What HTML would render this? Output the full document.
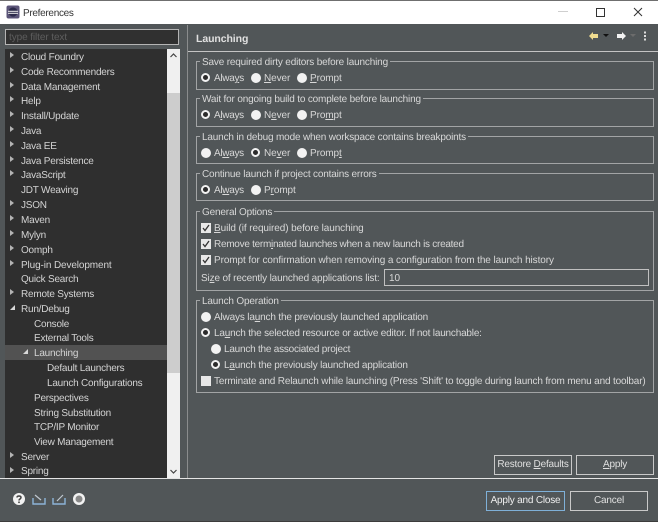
<!DOCTYPE html>
<html><head><meta charset="utf-8"><style>
html,body{margin:0;padding:0;width:658px;height:522px;overflow:hidden;background:#515658}
body{position:relative;font-family:"Liberation Sans",sans-serif;font-size:10px;color:#d8d8d8;text-rendering:geometricPrecision;filter:blur(.3px)}
.a{position:absolute}
.t{position:absolute;line-height:16px;margin-top:1px;white-space:nowrap;letter-spacing:-.09px}
.tr{color:#d4d4d4;letter-spacing:-.22px}
.g{position:absolute;left:196px;width:456px;border:1px solid #a2a4a5;box-sizing:content-box}
.l{position:absolute;background:#515658;padding:0 2px;line-height:14px;white-space:nowrap;left:3px;top:-6px;letter-spacing:-.17px}
.r{position:absolute;width:10px;height:10px;border-radius:50%;background:#f2f2f2}
.r.on{background:#2b2b2b;width:5px;height:5px;border:2.5px solid #f2f2f2}
.c{position:absolute;width:10px;height:10px;background:#e8e8e8}
.c svg{position:absolute;left:0;top:0}
.b{position:absolute;box-sizing:border-box;height:20px;border:1.5px solid #c9c9c9;text-align:center;line-height:18px;color:#e0e0e0;white-space:nowrap;letter-spacing:-.2px}
.ar{position:absolute;width:0;height:0;border-left:4px solid #b4b4b4;border-top:3.5px solid transparent;border-bottom:3.5px solid transparent;left:10px}
.ex{position:absolute;width:0;height:0;border-right:5px solid #d8d8d8;border-top:5px solid transparent}
u{text-decoration:underline}
</style></head><body>
<!-- title bar -->
<div class="a" style="left:0;top:0;width:658px;height:24px;background:#fff"></div>
<div class="a" style="left:0;top:0;width:658px;height:1px;background:#6f6f6f"></div>
<svg class="a" style="left:6px;top:5px" width="14" height="14" viewBox="0 0 14 14"><rect x="0.5" y="0.5" width="13" height="13" rx="2" fill="#5b5578"/><circle cx="7" cy="7" r="4.6" fill="#2c2a4a"/><rect x="2" y="5.8" width="10" height="1" fill="#eee"/><rect x="2" y="7.8" width="10" height="1" fill="#eee"/></svg>
<div class="t" style="left:23px;top:5px;color:#333;letter-spacing:-.3px">Preferences</div>
<div class="a" style="left:558px;top:11px;width:10px;height:1px;background:#cfcfcf"></div>
<div class="a" style="left:596px;top:8px;width:7px;height:7px;border:1px solid #333"></div>
<svg class="a" style="left:633px;top:7px" width="10" height="10"><path d="M1 1L9 9M9 1L1 9" stroke="#333" stroke-width="1"/></svg>

<!-- left -->
<div class="a" style="left:5px;top:29px;width:172px;height:14px;border:1.5px solid #b4b4b4;background:#303030"></div>
<div class="t" style="left:9px;top:29px;color:#5e5e5e">type filter text</div>
<div class="a" style="left:5px;top:49px;width:162px;height:429px;background:#2f2f2f;overflow:hidden"></div>
<div class="a" style="left:167px;top:49px;width:13px;height:429px;background:#f0f0f0"></div>
<div class="a" style="left:167px;top:93px;width:13px;height:280px;background:#cdcdcd"></div>
<svg class="a" style="left:170px;top:53px" width="7" height="5"><path d="M.5 4L3.5 1L6.5 4" fill="none" stroke="#444" stroke-width="1.2"/></svg>
<svg class="a" style="left:170px;top:469px" width="7" height="5"><path d="M.5 1L3.5 4L6.5 1" fill="none" stroke="#444" stroke-width="1.2"/></svg>
<div class="a" style="left:5px;top:345px;width:162px;height:15px;background:#525252"></div>

<div class="ar" style="top:52px"></div><div class="t tr" style="left:21px;top:49px">Cloud Foundry</div>
<div class="ar" style="top:67px"></div><div class="t tr" style="left:21px;top:64px">Code Recommenders</div>
<div class="ar" style="top:82px"></div><div class="t tr" style="left:21px;top:79px">Data Management</div>
<div class="ar" style="top:96px"></div><div class="t tr" style="left:21px;top:93px">Help</div>
<div class="ar" style="top:111px"></div><div class="t tr" style="left:21px;top:108px">Install/Update</div>
<div class="ar" style="top:126px"></div><div class="t tr" style="left:21px;top:123px">Java</div>
<div class="ar" style="top:141px"></div><div class="t tr" style="left:21px;top:138px">Java EE</div>
<div class="ar" style="top:156px"></div><div class="t tr" style="left:21px;top:153px">Java Persistence</div>
<div class="ar" style="top:170px"></div><div class="t tr" style="left:21px;top:167px">JavaScript</div>
<div class="t tr" style="left:21px;top:182px">JDT Weaving</div>
<div class="ar" style="top:200px"></div><div class="t tr" style="left:21px;top:197px">JSON</div>
<div class="ar" style="top:215px"></div><div class="t tr" style="left:21px;top:212px">Maven</div>
<div class="ar" style="top:230px"></div><div class="t tr" style="left:21px;top:227px">Mylyn</div>
<div class="ar" style="top:245px"></div><div class="t tr" style="left:21px;top:242px">Oomph</div>
<div class="ar" style="top:260px"></div><div class="t tr" style="left:21px;top:257px;letter-spacing:-.12px">Plug-in Development</div>
<div class="t tr" style="left:21px;top:271px">Quick Search</div>
<div class="ar" style="top:289px"></div><div class="t tr" style="left:21px;top:286px">Remote Systems</div>
<div class="ex" style="left:10px;top:305px"></div><div class="t tr" style="left:21px;top:301px">Run/Debug</div>
<div class="t tr" style="left:34px;top:316px">Console</div>
<div class="t tr" style="left:34px;top:330px">External Tools</div>
<div class="ex" style="left:23px;top:349px"></div><div class="t tr" style="left:34px;top:345px">Launching</div>
<div class="t tr" style="left:47px;top:360px">Default Launchers</div>
<div class="t tr" style="left:47px;top:375px">Launch Configurations</div>
<div class="t tr" style="left:34px;top:390px">Perspectives</div>
<div class="t tr" style="left:34px;top:405px">String Substitution</div>
<div class="t tr" style="left:34px;top:419px">TCP/IP Monitor</div>
<div class="t tr" style="left:34px;top:434px">View Management</div>
<div class="ar" style="top:452px"></div><div class="t tr" style="left:21px;top:449px">Server</div>
<div class="ar" style="top:467px"></div><div class="t tr" style="left:21px;top:463px">Spring</div>

<!-- sash + separators -->
<div class="a" style="left:187px;top:25px;width:1px;height:453px;background:#8a8c8d"></div>
<div class="a" style="left:188px;top:51px;width:470px;height:1px;background:#c4c4c4"></div>
<div class="a" style="left:0;top:478px;width:658px;height:1px;background:#e4e4e4"></div>
<div class="a" style="left:0;top:521px;width:658px;height:1px;background:#3c3c3c"></div>

<!-- header -->
<div class="t" style="left:196px;top:30px;font-weight:bold;color:#e0e0e0;font-size:10.5px">Launching</div>
<svg class="a" style="left:587px;top:30px" width="60" height="12"><path d="M2 6L6 2V4H11V8H6V10Z" fill="#f0dc90"/><path d="M16 4H22L19 7Z" fill="#111"/><path d="M39 6L35 2V4H30V8H35V10Z" fill="#f2f2f2"/><path d="M43 4H49L46 7Z" fill="#6c6c6c"/><rect x="57" y="1.500" width="2" height="2" fill="#ddd"/><rect x="57" y="5" width="2" height="2" fill="#ddd"/><rect x="57" y="8.500" width="2" height="2" fill="#ddd"/></svg>

<!-- group 1 -->
<div class="g" style="top:61px;height:27px"><div class="l">Save required dirty editors before launching</div></div>
<div class="r on" style="left:201px;top:73px"></div><div class="t" style="left:214px;top:70px;letter-spacing:-.3px">Alwa<u>y</u>s</div>
<div class="r" style="left:251px;top:73px"></div><div class="t" style="left:264px;top:70px"><u>N</u>ever</div>
<div class="r" style="left:297px;top:73px"></div><div class="t" style="left:310px;top:70px"><u>P</u>rompt</div>
<!-- group 2 -->
<div class="g" style="top:98px;height:27px"><div class="l">Wait for ongoing build to complete before launching</div></div>
<div class="r on" style="left:201px;top:110px"></div><div class="t" style="left:214px;top:107px;letter-spacing:-.3px">A<u>l</u>ways</div>
<div class="r" style="left:251px;top:110px"></div><div class="t" style="left:264px;top:107px">N<u>e</u>ver</div>
<div class="r" style="left:297px;top:110px"></div><div class="t" style="left:310px;top:107px">Pro<u>m</u>pt</div>
<!-- group 3 -->
<div class="g" style="top:136px;height:26px"><div class="l">Launch in debug mode when workspace contains breakpoints</div></div>
<div class="r" style="left:201px;top:148px"></div><div class="t" style="left:214px;top:145px;letter-spacing:-.3px">Al<u>w</u>ays</div>
<div class="r on" style="left:251px;top:148px"></div><div class="t" style="left:264px;top:145px">Ne<u>v</u>er</div>
<div class="r" style="left:297px;top:148px"></div><div class="t" style="left:310px;top:145px">Promp<u>t</u></div>
<!-- group 4 -->
<div class="g" style="top:173px;height:26px"><div class="l">Continue launch if project contains errors</div></div>
<div class="r on" style="left:201px;top:185px"></div><div class="t" style="left:214px;top:182px;letter-spacing:-.3px">Al<u>w</u>ays</div>
<div class="r" style="left:251px;top:185px"></div><div class="t" style="left:264px;top:182px">P<u>r</u>ompt</div>
<!-- group 5 -->
<div class="g" style="top:211px;height:78px"><div class="l">General Options</div></div>
<div class="c" style="left:201px;top:223px"><svg width="10" height="10"><path d="M2 5L4 7.500L8 2" fill="none" stroke="#333" stroke-width="1.300"/></svg></div><div class="t" style="left:214px;top:220px"><u>B</u>uild (if required) before launching</div>
<div class="c" style="left:201px;top:239px"><svg width="10" height="10"><path d="M2 5L4 7.500L8 2" fill="none" stroke="#333" stroke-width="1.300"/></svg></div><div class="t" style="left:214px;top:236px;letter-spacing:-.27px">Remove term<u>i</u>nated launches when a new launch is created</div>
<div class="c" style="left:201px;top:255px"><svg width="10" height="10"><path d="M2 5L4 7.500L8 2" fill="none" stroke="#333" stroke-width="1.300"/></svg></div><div class="t" style="left:214px;top:252px">Prompt for confirmation when removing a configuration from the launch history</div>
<div class="t" style="left:201px;top:270px;letter-spacing:-.15px">Si<u>z</u>e of recently launched applications list:</div>
<div class="a" style="left:384px;top:269px;width:263px;height:15px;border:1.500px solid #c0c0c0"></div>
<div class="t" style="left:389px;top:270px">10</div>
<!-- group 6 -->
<div class="g" style="top:300px;height:91px"><div class="l">Launch Operation</div></div>
<div class="r" style="left:201px;top:312px"></div><div class="t" style="left:214px;top:309px;letter-spacing:-.17px">Always la<u>u</u>nch the previously launched application</div>
<div class="r on" style="left:201px;top:328px"></div><div class="t" style="left:214px;top:325px;letter-spacing:-.2px">La<u>u</u>nch the selected resource or active editor. If not launchable:</div>
<div class="r" style="left:211px;top:344px"></div><div class="t" style="left:224px;top:341px;letter-spacing:-.23px">Launch the associated project</div>
<div class="r on" style="left:211px;top:360px"></div><div class="t" style="left:224px;top:357px;letter-spacing:-.18px">L<u>a</u>unch the previously launched application</div>
<div class="c" style="left:201px;top:376px;background:#e8e8e8"></div><div class="t" style="left:214px;top:373px;letter-spacing:-.17px">Terminate and Relaunch while launching (Press 'Shift' to toggle during launch from menu and toolbar)</div>

<!-- buttons -->
<div class="b" style="left:494px;top:455px;width:78px">Restore <u>D</u>efaults</div>
<div class="b" style="left:576px;top:455px;width:78px"><u>A</u>pply</div>
<div class="b" style="left:486px;top:491px;width:79px;border-color:#7fb0d8;color:#f0f0f0">Apply and Close</div>
<div class="b" style="left:570px;top:491px;width:78px">Cancel</div>

<!-- bottom icons -->
<svg class="a" style="left:12px;top:491px" width="76" height="16">
<circle cx="7" cy="8" r="6" fill="#f2f2f2"/>
<path d="M5 6.500C5 4.500 9 4.500 9 6.500C9 8 7 8 7 9.500" fill="none" stroke="#444" stroke-width="1.500"/><rect x="6.200" y="10.500" width="1.600" height="1.600" fill="#444"/>
<path d="M21 7V13H33V7" fill="none" stroke="#8db4d8" stroke-width="1.400"/><path d="M23 4L29 9" stroke="#c0c8d0" stroke-width="1.200"/>
<path d="M41 7V13H53V7" fill="none" stroke="#8db4d8" stroke-width="1.400"/><path d="M45 10L51 4" stroke="#c0c8d0" stroke-width="1.200"/>
<circle cx="67" cy="8" r="6" fill="#f2f2f2"/><circle cx="67" cy="8" r="3.500" fill="#888"/>
</svg>
</body></html>
